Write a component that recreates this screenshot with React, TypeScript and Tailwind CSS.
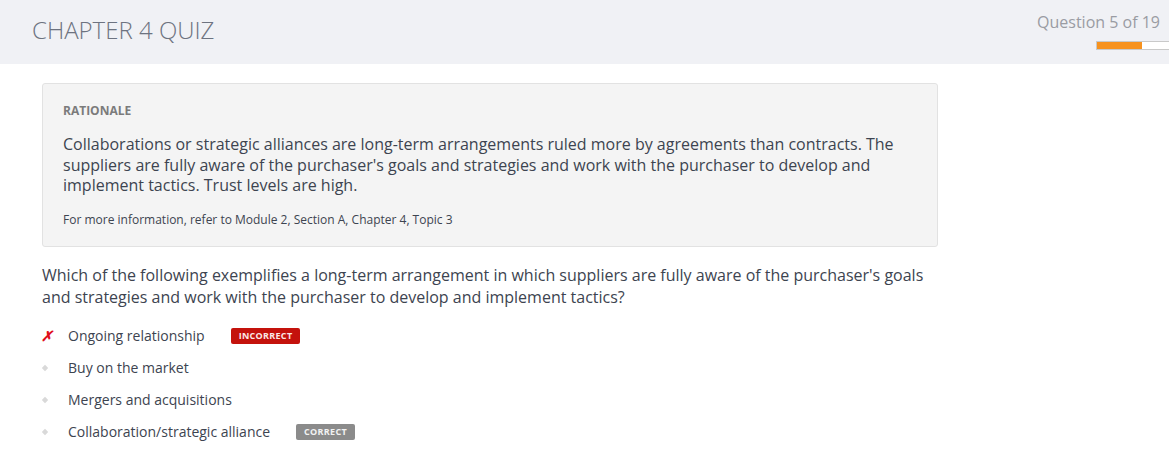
import React from 'react';

const options = [
  { text: 'Ongoing relationship', status: 'incorrect' },
  { text: 'Buy on the market', status: null },
  { text: 'Mergers and acquisitions', status: null },
  { text: 'Collaboration/strategic alliance', status: 'correct' },
];

const Diamond: React.FC = () => (
  <svg width="8" height="8" viewBox="0 0 8 8">
    <path d="M4 0.8 L7.2 4 L4 7.2 L0.8 4 Z" fill="#d9d9d9" />
  </svg>
);

const App: React.FC = () => {
  return (
    <div className="min-h-[460px] bg-white font-['Open_Sans',sans-serif]">
      <header className="h-16 bg-[#f0f1f5] flex justify-between">
        <h1 className="pl-[32px] pt-[14px] text-[24px] font-light text-[#6d7380] leading-8">
          CHAPTER 4 QUIZ
        </h1>
        <div className="flex flex-col items-end pt-[11px]">
          <div className="pr-[9px] text-[16px] text-[#9a9ca3] leading-[22px]">Question 5 of 19</div>
          <div className="mt-[8px] ml-auto w-[73px] h-[9px] border border-[#c9c9c9] border-r-0 bg-white flex">
            <div className="w-[45px] h-full bg-[#f7921e]" />
          </div>
        </div>
      </header>

      <main className="pl-[42px] w-[938px] pt-[19px]">
        <section className="bg-[#f4f4f4] border border-[#e2e2e2] rounded-[3px] px-[20px] pt-[17px] pb-[18px]">
          <div className="text-[12px] font-bold text-[#7b7b7b] leading-5">RATIONALE</div>
          <p className="mt-[13px] text-[16px] text-[#3d4450] leading-[20.5px]">
            Collaborations or strategic alliances are long-term arrangements ruled more by agreements than contracts. The suppliers are fully aware of the purchaser's goals and strategies and work with the purchaser to develop and implement tactics. Trust levels are high.
          </p>
          <p className="mt-[16px] text-[12px] text-[#3d4450] leading-4">
            For more information, refer to Module 2, Section A, Chapter 4, Topic 3
          </p>
        </section>

        <p className="mt-[17px] text-[16px] text-[#3d4450] leading-[22px] pr-[10px]">
          Which of the following exemplifies a long-term arrangement in which suppliers are fully aware of the purchaser's goals and strategies and work with the purchaser to develop and implement tactics?
        </p>

        <ul className="mt-[12px] -ml-[2px]">
          {options.map((o) => (
            <li key={o.text} className="h-8 flex items-center">
              <span className="w-[28px] flex items-center justify-start">
                {o.status === 'incorrect' ? (
                  <span className="text-[#e0101a] text-[14px] font-bold italic leading-none pl-[1px]">✗</span>
                ) : (
                  <span className="pl-[1px] flex"><Diamond /></span>
                )}
              </span>
              <span className="text-[14px] text-[#3d4450]">{o.text}</span>
              {o.status === 'incorrect' && (
                <span className="ml-[26px] h-4 px-[8px] flex items-center rounded-[2px] bg-[#c4120c] text-[9px] font-bold tracking-[0.3px] text-[#fbe9e6]">
                  INCORRECT
                </span>
              )}
              {o.status === 'correct' && (
                <span className="ml-[26px] h-4 px-[8px] flex items-center rounded-[2px] bg-[#8b8b8b] text-[9px] font-bold tracking-[0.3px] text-[#f2f2f2]">
                  CORRECT
                </span>
              )}
            </li>
          ))}
        </ul>
      </main>
    </div>
  );
};

export default App;
